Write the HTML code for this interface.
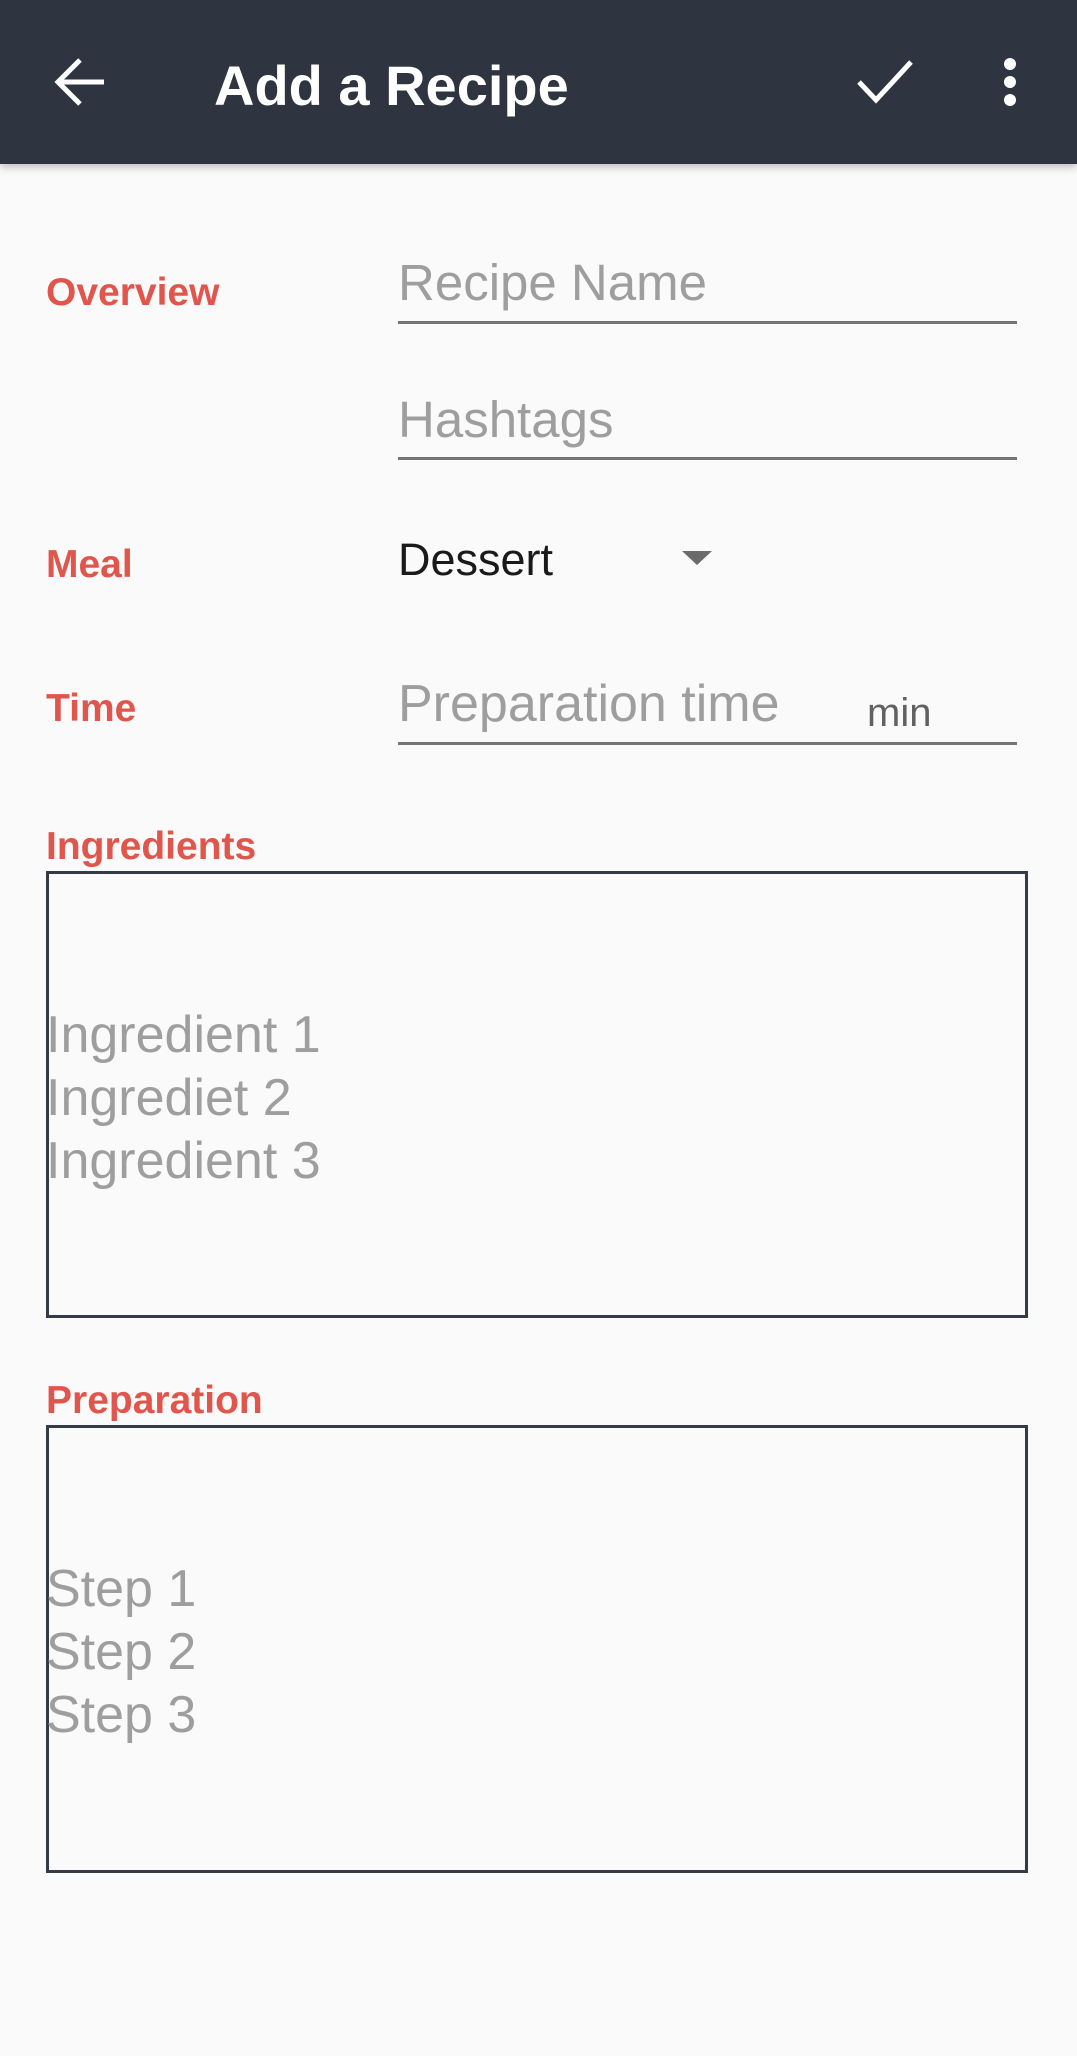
<!DOCTYPE html>
<html><head><meta charset="utf-8"><style>
html,body{margin:0;padding:0}
body{width:1077px;height:2056px;background:#fafafa;position:relative;overflow:hidden;font-family:"Liberation Sans",sans-serif}
.hdr{position:absolute;left:0;top:0;width:1077px;height:164px;background:#2e3440;box-shadow:0 3px 8px rgba(0,0,0,.25)}
.t{position:absolute;line-height:1;white-space:nowrap}
.lab{color:#e0564d;font-weight:bold;font-size:39px;left:46px}
.ph{color:#9e9e9e;font-size:51px;left:398px}
.ul{position:absolute;left:398px;width:619px;height:3px;background:#757575}
.box{position:absolute;left:46px;width:976px;border:3px solid #343a46}
.ml{position:absolute;left:46px;color:#9e9e9e;font-size:52px;line-height:63px}
</style></head><body>
<div class="hdr">
<svg style="position:absolute;left:52px;top:56px" width="56" height="52" viewBox="0 0 56 52"><path d="M52 26H8M28 4L6 26l22 22" fill="none" stroke="#fff" stroke-width="5"/></svg>
<div class="t" style="left:214px;top:58px;font-size:56px;color:#fff;font-weight:bold">Add a Recipe</div>
<svg style="position:absolute;left:856px;top:58px" width="58" height="46" viewBox="0 0 58 46"><path d="M3 24l17 18L55 4" fill="none" stroke="#fff" stroke-width="5"/></svg>
<svg style="position:absolute;left:1000px;top:57px" width="20" height="50" viewBox="0 0 20 50"><circle cx="10" cy="7" r="6" fill="#fff"/><circle cx="10" cy="25" r="6" fill="#fff"/><circle cx="10" cy="43" r="6" fill="#fff"/></svg>
</div>
<div class="t lab" style="top:273px">Overview</div>
<div class="t ph" style="top:257px">Recipe Name</div>
<div class="ul" style="top:321px"></div>
<div class="t ph" style="top:394px">Hashtags</div>
<div class="ul" style="top:457px"></div>
<div class="t lab" style="top:545px">Meal</div>
<div class="t" style="left:398px;top:537px;font-size:45px;color:#1a1a1a">Dessert</div>
<svg style="position:absolute;left:682px;top:551px" width="30" height="14" viewBox="0 0 30 14"><path d="M0 0h30L15 14z" fill="#6b6b6b"/></svg>
<div class="t lab" style="top:689px">Time</div>
<div class="t ph" style="top:678px;font-size:52px">Preparation time</div>
<div class="t" style="left:867px;top:693px;font-size:40px;color:#616161">min</div>
<div class="ul" style="top:742px"></div>
<div class="t lab" style="top:827px">Ingredients</div>
<div class="box" style="top:871px;height:441px"></div>
<div class="ml" style="top:1004px">Ingredient 1<br>Ingrediet 2<br>Ingredient 3</div>
<div class="t lab" style="top:1381px">Preparation</div>
<div class="box" style="top:1425px;height:442px"></div>
<div class="ml" style="top:1558px">Step 1<br>Step 2<br>Step 3</div>
</body></html>
